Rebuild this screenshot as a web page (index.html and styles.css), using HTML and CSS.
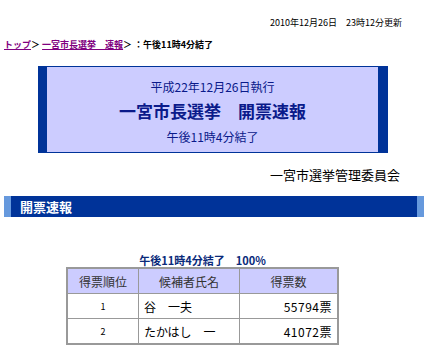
FILE: index.html
```html
<!DOCTYPE html>
<html lang="ja">
<head>
    <meta charset="UTF-8">
    <title>一宮市長選挙 開票速報</title>
    <link rel="stylesheet" href="styles.css">
</head>
<body>

<div class="update-time">2010年12月26日　23時12分更新</div>

<div class="breadcrumb">
    <a href="#">トップ</a>＞ <a href="#">一宮市長選挙　速報</a>＞ ：午後11時4分結了
</div>

<div class="title-box">
    <p class="title-date">平成22年12月26日執行</p>
    <h1 class="title-main">一宮市長選挙　開票速報</h1>
    <p class="title-status">午後11時4分結了</p>
</div>

<div class="committee">一宮市選挙管理委員会</div>

<h2 class="section-bar">開票速報</h2>

<div class="result">
    <div class="result-caption">午後11時4分結了　100%</div>
    <table class="result-table">
        <tr>
            <th class="col-rank">得票順位</th>
            <th class="col-name">候補者氏名</th>
            <th class="col-votes">得票数</th>
        </tr>
        <tr>
            <td class="rank">1</td>
            <td class="name">谷　一夫</td>
            <td class="votes">55794票</td>
        </tr>
        <tr>
            <td class="rank">2</td>
            <td class="name">たかはし　一</td>
            <td class="votes">41072票</td>
        </tr>
    </table>
</div>

</body>
</html>
```

FILE: styles.css
```css
body {
    margin: 0;
    padding: 0;
    background-color: #ffffff;
    color: #000000;
    font-family: "Noto Sans CJK JP", "Liberation Sans", sans-serif;
}

.update-time {
    padding: 15px 28px 0 0;
    height: 15px;
    line-height: 15px;
    font-size: 9px;
    text-align: right;
}

.breadcrumb {
    margin-top: 8px;
    padding-left: 4px;
    height: 14px;
    line-height: 14px;
    font-size: 9px;
    font-weight: bold;
}

.breadcrumb a {
    color: #800080;
}

.title-box {
    box-sizing: border-box;
    margin: 14px 0 0 38px;
    width: 350px;
    height: 87px;
    background-color: #ccccff;
    border: 1px solid #003399;
    border-left-width: 9px;
    border-right-width: 10px;
    color: #0a1a8a;
    text-align: center;
    padding-top: 10px;
}

.title-date {
    margin: 0;
    font-size: 12px;
    line-height: 20px;
}

.title-main {
    margin: 2px 0 0;
    font-size: 17px;
    line-height: 24px;
    font-weight: bold;
}

.title-status {
    margin: 3px 0 0;
    font-size: 12px;
    line-height: 22px;
}

.committee {
    margin-top: 13px;
    padding-right: 30px;
    text-align: right;
    font-size: 13px;
    line-height: 18px;
}

.section-bar {
    box-sizing: border-box;
    margin: 12px 0 0 4px;
    width: 420px;
    height: 21px;
    background-color: #003399;
    border-left: 7px solid #6699dd;
    border-right: 7px solid #6699dd;
    color: #ffffff;
    font-size: 13px;
    font-weight: bold;
    line-height: 21px;
    padding-left: 9px;
}

.result {
    margin: 36px 0 0 66px;
    width: 273px;
}

.result-caption {
    text-align: center;
    color: #0a2a7a;
    font-size: 11px;
    font-weight: bold;
    line-height: 14px;
    height: 14px;
}

.result-table {
    width: 273px;
    border-collapse: collapse;
    border: 2px solid #999999;
    font-size: 12px;
}

.result-table th,
.result-table td {
    border: 1px solid #999999;
    height: 24px;
    padding: 0 5px;
}

.result-table th {
    background-color: #ccccff;
    font-weight: normal;
    color: #333333;
}

.col-rank {
    width: 60px;
}

.col-name {
    width: 90px;
}

.rank {
    text-align: center;
    font-size: 9px;
}

.votes {
    text-align: right;
    letter-spacing: 0.5px;
}
```
